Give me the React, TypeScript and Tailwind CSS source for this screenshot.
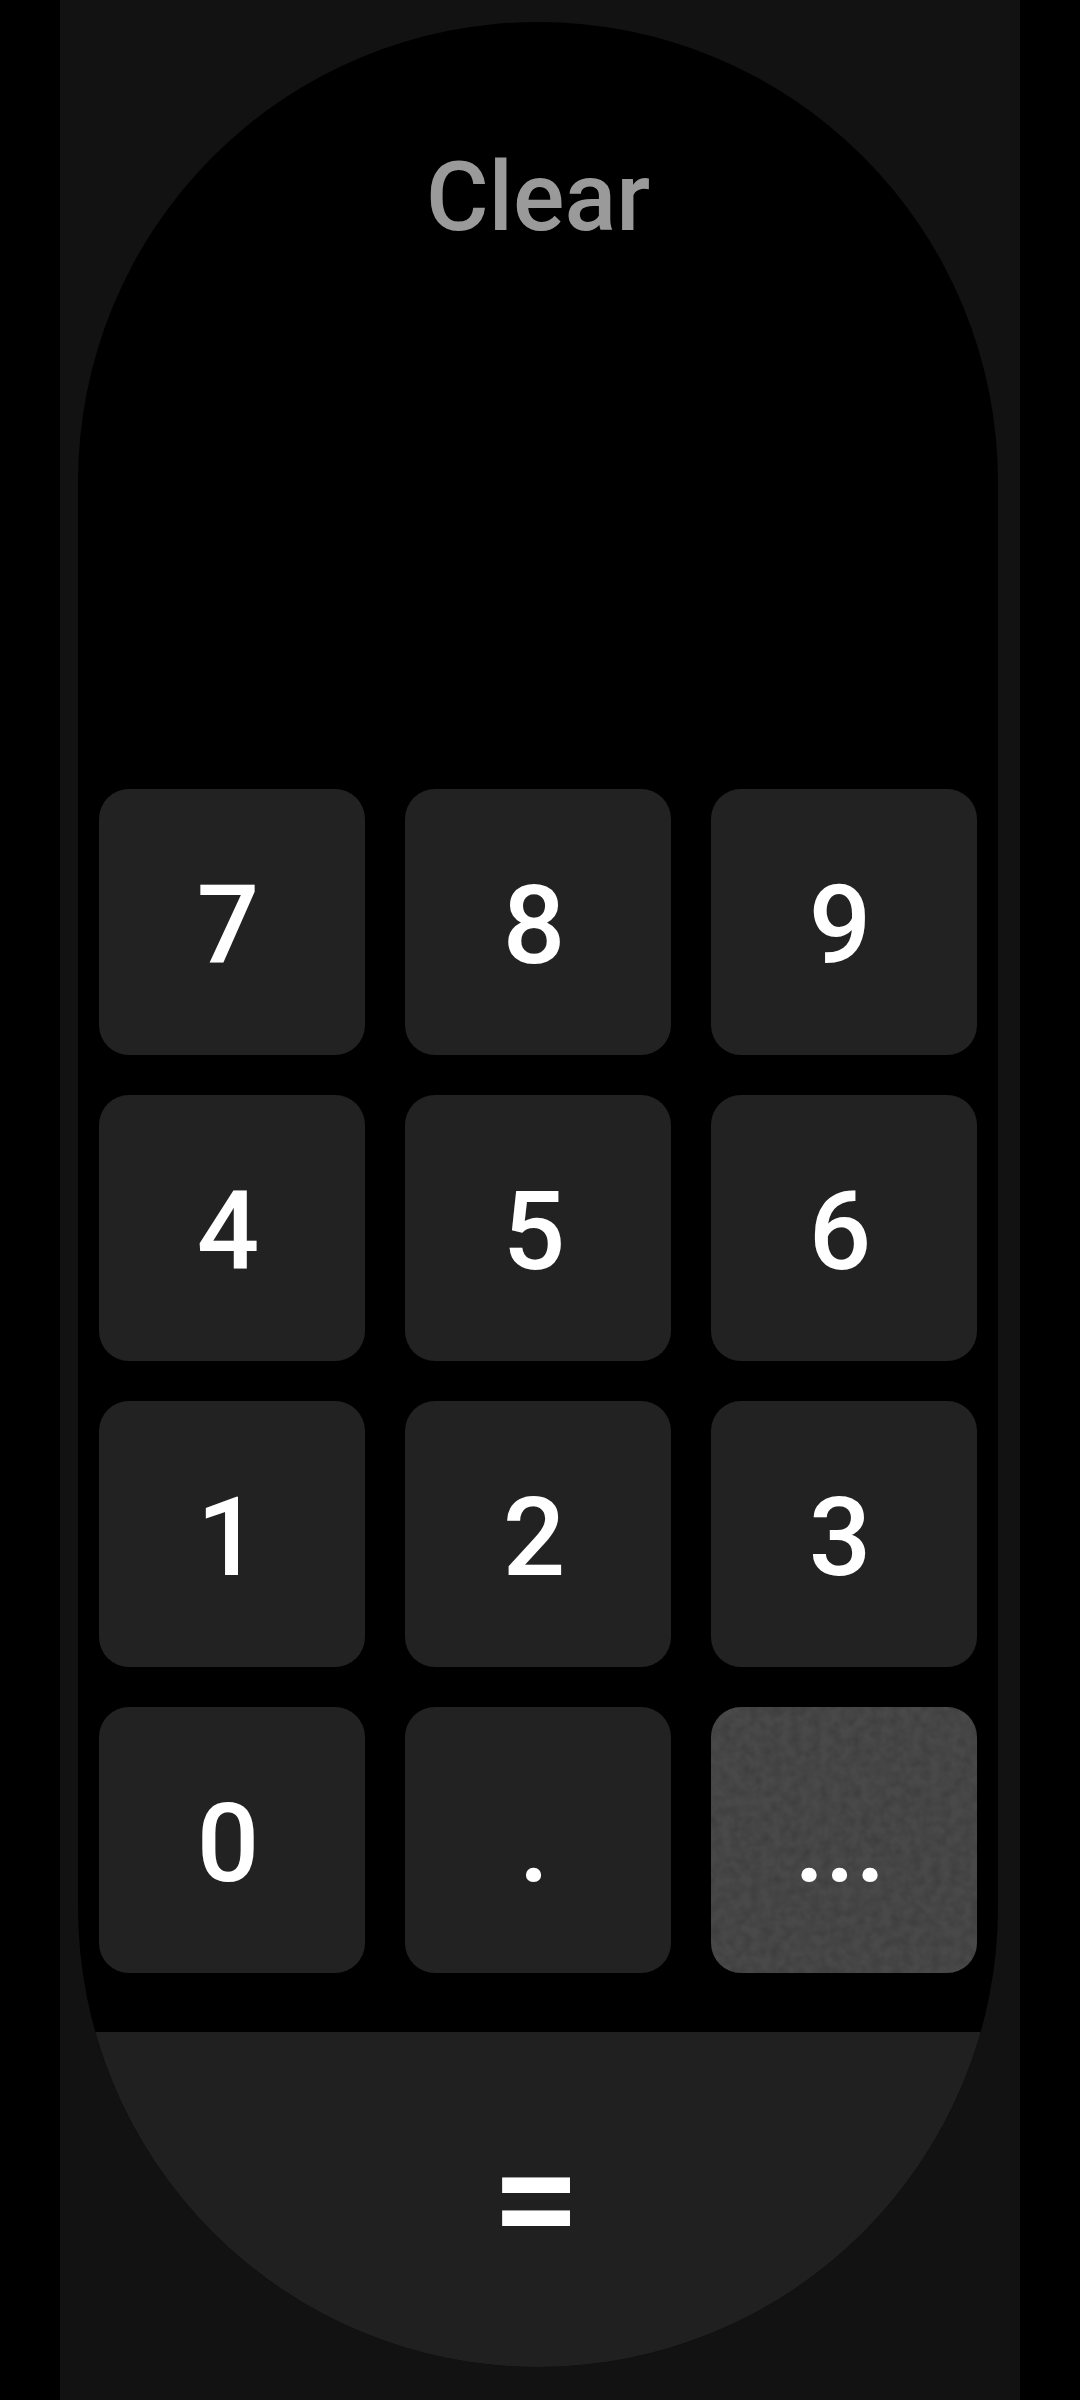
import React from 'react';

const rows: string[][] = [
  ['7', '8', '9'],
  ['4', '5', '6'],
  ['1', '2', '3'],
  ['0', '.', '...'],
];

// grainy overlay for the highlighted (pressed) key
const Grain: React.FC = () => (
  <svg className="absolute inset-0 h-full w-full" aria-hidden="true">
    <filter id="grain">
      <feTurbulence type="fractalNoise" baseFrequency="0.1" numOctaves="2" seed="4" />
      <feColorMatrix type="matrix" values="0 0 0 0 0  0 0 0 0 0  0 0 0 0 0  0 0 0 -1.6 1.1" />
    </filter>
    <rect width="100%" height="100%" filter="url(#grain)" opacity="0.16" />
  </svg>
);

const Key: React.FC<{ label: string }> = ({ label }) => {
  const active = label === '...';
  return (
    <button
      className={
        'relative flex h-[266px] items-center justify-center overflow-hidden rounded-[30px] pt-[8px] pr-[8px] text-[110px] font-medium leading-none text-white ' +
        (active ? 'bg-[#494949]' : 'bg-[#222222]')
      }
    >
      {active && <Grain />}
      <span className="relative">{label}</span>
    </button>
  );
};

export default function App() {
  return (
    <div
      className="flex min-h-[2400px] justify-center bg-black"
      style={{ fontFamily: 'Roboto, "Noto Sans", sans-serif' }}
    >
      <div className="w-[960px] bg-[#121212] pt-[22px] pr-[22px] pb-[33px] pl-[18px]">
        <div className="flex h-[2345px] flex-col overflow-hidden rounded-[460px] bg-black">
          <div className="h-[767px] pt-[127px] text-center">
            <span className="text-[96px] font-medium leading-none text-[#9a9a9a]">Clear</span>
          </div>

          <div className="grid grid-cols-3 gap-10 px-[21px]">
            {rows.flat().map((k) => (
              <Key key={k} label={k} />
            ))}
          </div>

          <button className="mt-[59px] flex h-[335px] items-center justify-center pr-[4px] bg-[#202020] text-[160px] font-medium leading-none text-white">
            =
          </button>
        </div>
      </div>
    </div>
  );
}
